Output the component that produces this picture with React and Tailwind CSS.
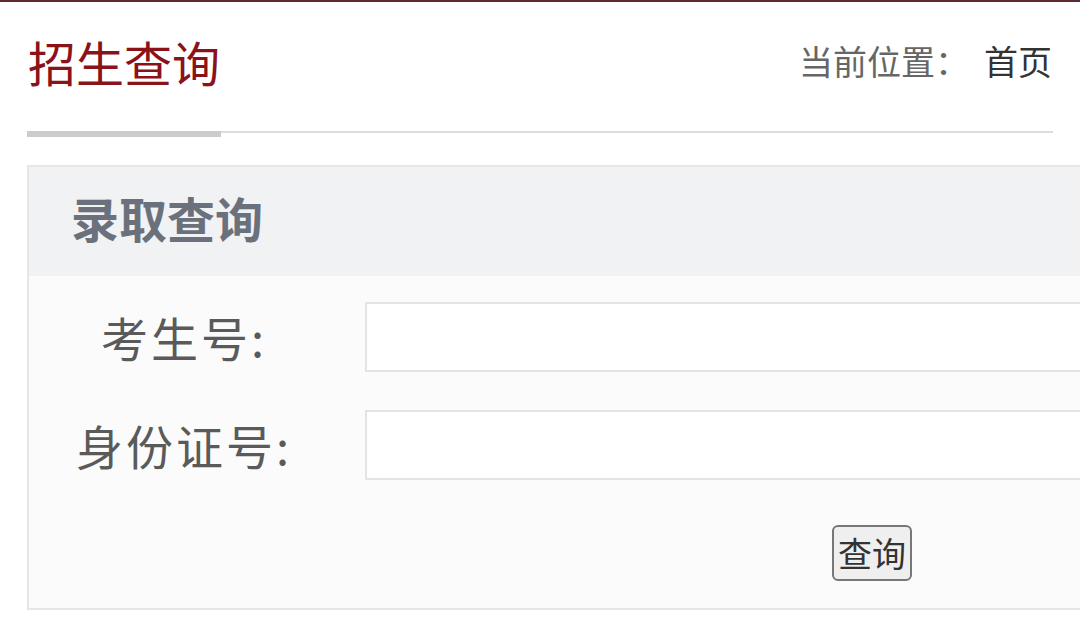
import React, { useState } from 'react';

const Field = ({ label, value, onChange }) => (
  <div className="flex items-center">
    <label className="w-[310px] mr-[26px] pb-[2px] text-center text-[47px] tracking-[3px] leading-none text-[#5a5a5a]">
      {label}
    </label>
    <input
      type="text"
      value={value}
      onChange={e => onChange(e.target.value)}
      className="flex-1 h-[70px] bg-white border-2 border-[#e4e4e4] outline-none px-3 text-[32px]"
    />
  </div>
);

const App = () => {
  const [examNo, setExamNo] = useState('');
  const [idNo, setIdNo] = useState('');

  return (
    <div
      className="w-[1080px] h-[635px] overflow-hidden bg-white border-t-2 border-[#5e2a31]"
      style={{ fontFamily: '"Noto Sans CJK SC", "Noto Sans", sans-serif' }}
    >
      {/* page title + breadcrumb */}
      <div className="flex items-center justify-between h-[124px] pb-[6px] pl-[28px] pr-[28px]">
        <h1 className="text-[48px] leading-none text-[#8a1218]">招生查询</h1>
        <div className="text-[34px] leading-none text-[#666666]">
          当前位置：<span className="ml-[15px] text-[#333333]">首页</span>
        </div>
      </div>

      {/* underline */}
      <div className="flex items-start ml-[27px] w-[1026px] mt-[5px]">
        <div className="w-[194px] h-[6px] bg-[#cccccc]" />
        <div className="flex-1 h-[2px] bg-[#dddddd]" />
      </div>

      {/* query panel */}
      <div className="ml-[27px] mt-[28px] w-[1100px] border-2 border-[#e6e6e6]">
        <div className="flex items-center h-[109px] pb-[9px] pl-[42px] bg-[#f1f2f4]">
          <h2 className="text-[48px] leading-none font-bold text-[#6b717c]">录取查询</h2>
        </div>
        <div className="bg-[#fbfbfb] pt-[26px] pb-[27px]">
          <div className="flex flex-col gap-[38px]">
            <Field label="考生号:" value={examNo} onChange={setExamNo} />
            <Field label="身份证号:" value={idNo} onChange={setIdNo} />
          </div>
          <div className="flex pl-[803px] mt-[45px]">
            <button
              type="button"
              className="w-[80px] h-[56px] rounded-[6px] border-2 border-[#777777] bg-[#efefef] text-[34px] leading-none text-[#333333]"
            >
              查询
            </button>
          </div>
        </div>
      </div>
    </div>
  );
};

export default App;
